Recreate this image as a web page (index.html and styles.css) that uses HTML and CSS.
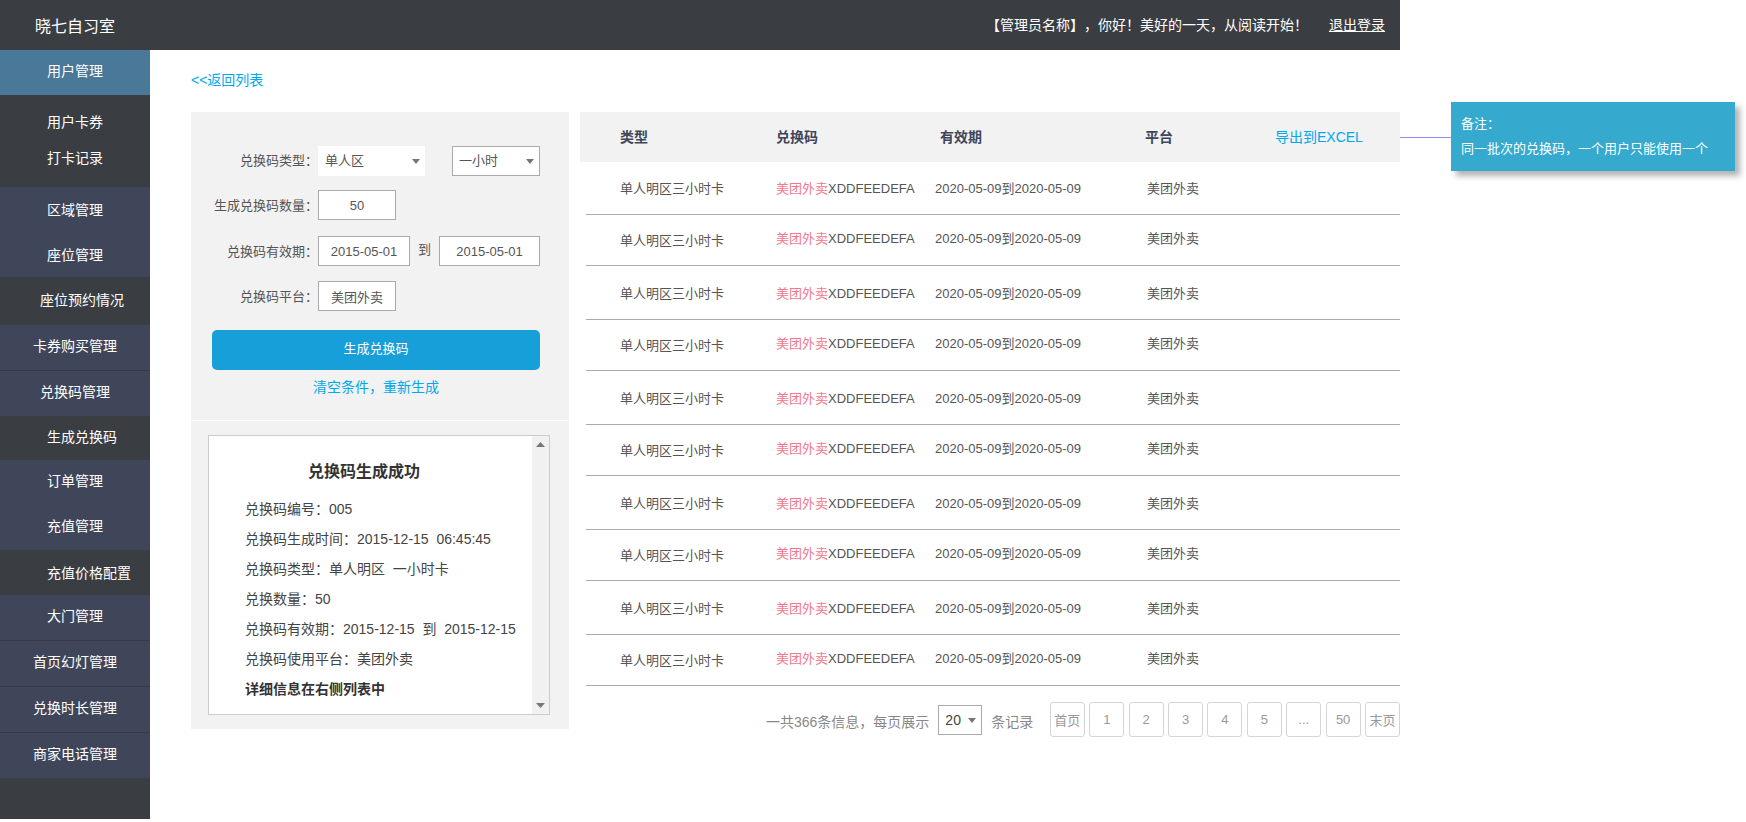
FILE: index.html
```html
<!DOCTYPE html>
<html lang="zh-CN">
<head>
<meta charset="utf-8">
<title>晓七自习室</title>
<link rel="stylesheet" href="styles.css">
</head>
<body>
<div class="page">
  <header class="topbar">
    <div class="logo">晓七自习室</div>
    <div class="greeting">【管理员名称】，你好！美好的一天，从阅读开始！</div>
    <a class="logout" href="#">退出登录</a>
  </header>
  <div class="shell">
    <nav class="sidebar">
      <a class="nav active" href="#">用户管理</a>
      <a class="nav dark nav-first" href="#">用户卡券</a>
      <a class="nav dark nav-card" href="#">打卡记录</a>
      <a class="nav nav-low" href="#">区域管理</a>
      <a class="nav nav-low" href="#">座位管理</a>
      <a class="nav dark nav-low nav-tall nav-indent" href="#">座位预约情况</a>
      <a class="nav sep" href="#">卡券购买管理</a>
      <a class="nav" href="#">兑换码管理</a>
      <a class="nav dark nav-sub nav-short" href="#">生成兑换码</a>
      <a class="nav" href="#">订单管理</a>
      <a class="nav" href="#">充值管理</a>
      <a class="nav dark nav-low nav-sub" href="#">充值价格配置</a>
      <a class="nav sep" href="#">大门管理</a>
      <a class="nav sep" href="#">首页幻灯管理</a>
      <a class="nav sep" href="#">兑换时长管理</a>
      <a class="nav" href="#">商家电话管理</a>
      <div class="nav-fill"></div>
    </nav>
    <main class="main">
      <a class="back" href="#">&lt;&lt;返回列表</a>
      <div class="columns">
        <section class="left">
          <div class="panel form">
            <div class="field f1">
              <label class="lab">兑换码类型：</label>
              <div class="select plain"><span>单人区</span><svg class="arrow" viewBox="0 0 8 5"><path d="M0 0h8L4 5z"/></svg></div>
              <div class="select boxed"><span>一小时</span><svg class="arrow" viewBox="0 0 8 5"><path d="M0 0h8L4 5z"/></svg></div>
            </div>
            <div class="field f2">
              <label class="lab">生成兑换码数量：</label>
              <div class="input short">50</div>
            </div>
            <div class="field f3">
              <label class="lab">兑换码有效期：</label>
              <div class="input date-a">2015-05-01</div>
              <span class="to">到</span>
              <div class="input date-b">2015-05-01</div>
            </div>
            <div class="field f4">
              <label class="lab">兑换码平台：</label>
              <div class="input short">美团外卖</div>
            </div>
            <button class="generate" type="button">生成兑换码</button>
            <a class="reset" href="#">清空条件，重新生成</a>
          </div>
          <div class="panel result-wrap">
            <div class="result">
              <div class="result-body">
                <h2 class="result-title">兑换码生成成功</h2>
                <p class="line">兑换码编号：005</p>
                <p class="line">兑换码生成时间：2015-12-15&nbsp;&nbsp;06:45:45</p>
                <p class="line">兑换码类型：单人明区&nbsp;&nbsp;一小时卡</p>
                <p class="line">兑换数量：50</p>
                <p class="line">兑换码有效期：2015-12-15&nbsp;&nbsp;到&nbsp;&nbsp;2015-12-15</p>
                <p class="line">兑换码使用平台：美团外卖</p>
                <p class="line strong">详细信息在右侧列表中</p>
              </div>
              <div class="scrollbar">
                <svg class="sb-arrow" viewBox="0 0 9 5"><path d="M4.5 0L9 5H0z"/></svg>
                <svg class="sb-arrow" viewBox="0 0 9 5"><path d="M0 0h9L4.500 5z"/></svg>
              </div>
            </div>
          </div>
        </section>
        <section class="right">
          <div class="thead">
            <span>类型</span><span>兑换码</span><span>有效期</span><span>平台</span><a class="export" href="#">导出到EXCEL</a>
          </div>
          <div class="row r-first"><span class="c1">单人明区三小时卡</span><span><em>美团外卖</em>XDDFEEDEFA</span><span>2020-05-09到2020-05-09</span><span>美团外卖</span></div>
          <div class="row r-short"><span class="c1">单人明区三小时卡</span><span><em>美团外卖</em>XDDFEEDEFA</span><span>2020-05-09到2020-05-09</span><span>美团外卖</span></div>
          <div class="row r-tall"><span class="c1">单人明区三小时卡</span><span><em>美团外卖</em>XDDFEEDEFA</span><span>2020-05-09到2020-05-09</span><span>美团外卖</span></div>
          <div class="row r-short"><span class="c1">单人明区三小时卡</span><span><em>美团外卖</em>XDDFEEDEFA</span><span>2020-05-09到2020-05-09</span><span>美团外卖</span></div>
          <div class="row r-tall"><span class="c1">单人明区三小时卡</span><span><em>美团外卖</em>XDDFEEDEFA</span><span>2020-05-09到2020-05-09</span><span>美团外卖</span></div>
          <div class="row r-short"><span class="c1">单人明区三小时卡</span><span><em>美团外卖</em>XDDFEEDEFA</span><span>2020-05-09到2020-05-09</span><span>美团外卖</span></div>
          <div class="row r-tall"><span class="c1">单人明区三小时卡</span><span><em>美团外卖</em>XDDFEEDEFA</span><span>2020-05-09到2020-05-09</span><span>美团外卖</span></div>
          <div class="row r-short"><span class="c1">单人明区三小时卡</span><span><em>美团外卖</em>XDDFEEDEFA</span><span>2020-05-09到2020-05-09</span><span>美团外卖</span></div>
          <div class="row r-tall"><span class="c1">单人明区三小时卡</span><span><em>美团外卖</em>XDDFEEDEFA</span><span>2020-05-09到2020-05-09</span><span>美团外卖</span></div>
          <div class="row r-short"><span class="c1">单人明区三小时卡</span><span><em>美团外卖</em>XDDFEEDEFA</span><span>2020-05-09到2020-05-09</span><span>美团外卖</span></div>
          <div class="pager">
            <span class="pager-text">一共366条信息，每页展示</span>
            <div class="page-size"><span>20</span><svg class="arrow" viewBox="0 0 8 5"><path d="M0 0h8L4 5z"/></svg></div>
            <span class="pager-text records">条记录</span>
            <div class="pages">
              <a class="pg" href="#">首页</a><a class="pg" href="#">1</a><a class="pg" href="#">2</a><a class="pg" href="#">3</a><a class="pg" href="#">4</a><a class="pg" href="#">5</a><a class="pg" href="#">...</a><a class="pg" href="#">50</a><a class="pg" href="#">末页</a>
            </div>
          </div>
        </section>
      </div>
    </main>
  </div>
</div>
<div class="connector"></div>
<aside class="note">
  <div>备注：</div>
  <div>同一批次的兑换码，一个用户只能使用一个</div>
</aside>
</body>
</html>
```
FILE: styles.css
```css
* { box-sizing: border-box; }
html, body { margin: 0; padding: 0; background: #fff; }
body {
  font-family: "Liberation Sans", "Noto Sans CJK SC", sans-serif;
  font-size: 13px;
  color: #555;
  height: 822px;
  overflow: hidden;
  position: relative;
  text-spacing-trim: space-all;
}
a { text-decoration: none; color: inherit; }
.page { width: 1400px; }

/* top bar */
.topbar {
  height: 50px;
  background: #3a3e42;
  color: #fff;
  display: flex;
  align-items: center;
  font-size: 14px;
  padding-right: 15px;
}
.logo { width: 150px; text-align: center; font-size: 16px; }
.greeting { margin-left: auto; margin-top: -2px; }
.logout { margin-left: 21px; margin-top: -2px; text-decoration: underline; }

.shell { display: flex; align-items: flex-start; }

/* sidebar */
.sidebar { width: 150px; height: 769px; display: flex; flex-direction: column; background: #3a3e42; flex: none; }
.nav {
  display: block;
  height: 45px;
  padding-top: 11px;
  line-height: 20px;
  font-size: 14px;
  text-align: center;
  color: #fff;
  background: #40465a;
  flex: none;
}
.nav.active { background: #4a7899; }
.nav.dark { background: #3a3e42; }
.nav-first { padding-top: 17px; }
.nav-card { height: 47px; padding-top: 8px; }
.nav-low { padding-top: 13px; }
.nav-tall { height: 48px; }
.nav-indent { padding-left: 14px; }
.nav-sub { text-align: left; padding-left: 47px; }
.nav-short { height: 44px; }
.sep { height: 46px; border-bottom: 1px solid #363a44; }
.nav-fill { flex: 1; }

/* main */
.main { flex: 1; padding: 20px 0 0 41px; min-width: 0; }
.back { display: block; font-size: 14px; line-height: 20px; color: #00a8ee; }
.columns { display: flex; align-items: flex-start; gap: 11px; margin-top: 22px; }

/* left column */
.left { width: 378px; flex: none; }
.panel { background: #f2f2f2; }
.form { height: 308px; padding-top: 34px; }
.field { display: flex; align-items: center; height: 30px; }
.f2 { margin-top: 14px; }
.f3 { margin-top: 16px; }
.f4 { margin-top: 15px; }
.lab { width: 127px; flex: none; text-align: right; font-size: 13px; color: #555; margin-top: -2px; }
.f1 .lab { margin-top: -4px; }
.select, .input { height: 30px; background: #fff; font-size: 13px; color: #555; }
.select { display: flex; align-items: center; justify-content: space-between; }
.select span { margin-top: -3px; }
.plain { width: 107px; padding: 0 5px 0 7px; }
.boxed { width: 88px; margin-left: 27px; border: 1px solid #aaa; padding: 0 5px 0 6px; }
.arrow { width: 8px; height: 5px; fill: #777; flex: none; }
.input { border: 1px solid #aaa; display: flex; align-items: center; justify-content: center; }
.short { width: 78px; }
.date-a { width: 92px; }
.date-b { width: 101px; }
.to { width: 29px; text-align: center; font-size: 13px; margin-top: -5px; }
.generate {
  display: block;
  width: 328px;
  height: 40px;
  margin: 19px 0 0 21px;
  border: 0;
  border-radius: 5px;
  background: #169fd8;
  color: #fff;
  font: inherit;
  font-size: 13px;
  padding: 0 0 5px;
}
.reset { display: block; margin: 7px 0 0 21px; width: 328px; text-align: center; font-size: 14px; line-height: 20px; color: #00a8ee; }

.result-wrap { margin-top: 1px; height: 308px; padding: 14px 0 0 17px; }
.result { width: 342px; height: 280px; background: #fff; border: 1px solid #ccc; display: flex; }
.result-body { flex: 1; padding-top: 24px; min-width: 0; }
.result-title { margin: 0 0 10px; padding-right: 13px; text-align: center; font-size: 16px; line-height: 24px; font-weight: bold; color: #333; }
.line { margin: 0; padding-left: 36px; font-size: 14px; line-height: 30px; color: #444; white-space: nowrap; }
.strong { font-weight: bold; color: #333; }
.scrollbar { width: 17px; background: #f1f1f1; display: flex; flex-direction: column; justify-content: space-between; align-items: center; padding: 6px 0 6px; flex: none; }
.sb-arrow { width: 9px; height: 5px; fill: #777; }

/* right column */
.right { width: 820px; flex: none; }
.thead {
  height: 50px;
  background: #f2f2f2;
  display: grid;
  grid-template-columns: 156px 164px 205px 130px 1fr;
  align-items: center;
  padding-left: 40px;
  font-size: 14px;
  font-weight: bold;
  color: #40465a;
}
.thead span { margin-top: -3px; }
.export { font-size: 14px; font-weight: normal; color: #00a8ee; margin-top: -3px; }
.row {
  margin-left: 6px;
  padding-left: 34px;
  display: grid;
  grid-template-columns: 156px 159px 212px 1fr;
  align-items: start;
  border-bottom: 1px solid #aaa;
  line-height: 20px;
  font-size: 13px;
  color: #555;
}
.row em { font-style: normal; color: #f2788c; }
.r-first { height: 53px; padding-top: 17px; }
.r-short { height: 51px; padding-top: 14px; }
.r-short .c1 { margin-top: 2px; }
.r-tall { height: 54px; padding-top: 18px; }

.pager { display: flex; align-items: flex-start; margin-top: 16px; padding-left: 186px; }
.pager-text { font-size: 14px; color: #888; line-height: 20px; margin-top: 10px; white-space: nowrap; }
.page-size {
  width: 44px;
  height: 30px;
  margin: 3px 9px 0 9px;
  border: 1px solid #aaa;
  display: flex;
  align-items: center;
  justify-content: space-between;
  padding: 0 5px 0 6px;
  font-size: 14px;
  color: #444;
}
.page-size span { margin-top: -1px; }
.pages { margin-left: auto; display: flex; gap: 4.4px; }
.pg {
  width: 35px;
  height: 35px;
  border: 1px solid #d5d5d5;
  border-radius: 3px;
  display: flex;
  align-items: center;
  justify-content: center;
  color: #999;
  font-size: 13px;
  padding-bottom: 1px;
}

/* annotation */
.connector { position: absolute; left: 1400px; top: 137px; width: 51px; height: 1px; background: #8a90f5; }
.note {
  position: absolute;
  left: 1451px;
  top: 102px;
  width: 284px;
  height: 69px;
  padding: 9px 10px;
  background: #36a9ce;
  color: #fff;
  font-size: 13px;
  line-height: 25px;
  box-shadow: 5px 5px 6px rgba(0, 0, 0, 0.3);
}
```
